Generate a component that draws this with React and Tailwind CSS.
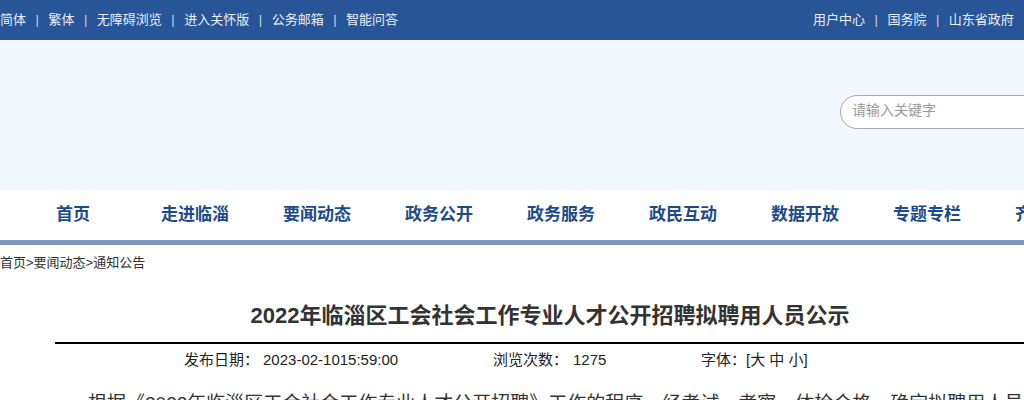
import React from 'react';

const topLeft = ['简体', '繁体', '无障碍浏览', '进入关怀版', '公务邮箱', '智能问答'];
const topRight = ['用户中心', '国务院', '山东省政府', '淄博市政府'];
const navItems = ['首页', '走进临淄', '要闻动态', '政务公开', '政务服务', '政民互动', '数据开放', '专题专栏', '齐都文化'];

function LinkGroup({ items }) {
    return (
        <div className="flex items-center">
            {items.map((t, i) => (
                <React.Fragment key={t}>
                    <a className="text-[13px] text-[#e8eef8] whitespace-nowrap">{t}</a>
                    {i < items.length - 1 && (
                        <span className="text-[13px] text-[#c9d5ea] mx-[9.5px]">|</span>
                    )}
                </React.Fragment>
            ))}
        </div>
    );
}

export default function App() {
    return (
        <div
            className="w-[1024px] h-[400px] overflow-hidden bg-white"
            style={{ fontFamily: '"Liberation Sans", "Noto Sans CJK SC", sans-serif' }}
        >
            <div className="w-[1100px]">
                {/* Top bar */}
                <div className="h-[40px] bg-[#285598] flex items-center">
                    <LinkGroup items={topLeft} />
                    <div className="ml-[415px]">
                        <LinkGroup items={topRight} />
                    </div>
                </div>

                {/* Header */}
                <div className="h-[150px] bg-[#f3f7fe] flex items-start">
                    <div className="ml-[840px] mt-[55px] w-[260px] h-[34px] bg-white border border-[#a9abb0] rounded-l-full flex items-center pl-[11px] pb-[3px]">
                        <span className="text-[14px] text-[#9a9a9a]">请输入关键字</span>
                    </div>
                </div>

                {/* Nav */}
                <div className="h-[50px] bg-white flex items-center pl-[12px]">
                    {navItems.map(n => (
                        <div key={n} className="w-[122px] shrink-0 text-center text-[17px] font-bold text-[#1d4a8c] whitespace-nowrap">
                            {n}
                        </div>
                    ))}
                </div>
                <div className="h-[5px] bg-[#7b96bd]" />

                {/* Breadcrumb */}
                <div className="pt-[10px] text-[13px] text-[#333] leading-[15px]">
                    首页&gt;要闻动态&gt;通知公告
                </div>

                {/* Article */}
                <div className="w-[1000px] mx-auto">
                    <h1 className="mt-[31px] text-center text-[22px] font-bold text-[#333] leading-[30px]">
                        2022年临淄区工会社会工作专业人才公开招聘拟聘用人员公示
                    </h1>
                    <div className="mx-[5px] mt-[11px] h-[2px] bg-black" />
                    <div className="flex items-center h-[32px] text-[15px] text-[#222] pl-[134px]">
                        <div className="w-[309px] whitespace-nowrap">
                            发布日期：<span className="ml-[4px]">2023-02-1015:59:00</span>
                        </div>
                        <div className="w-[208px] whitespace-nowrap">
                            浏览次数：<span className="ml-[5px]">1275</span>
                        </div>
                        <div className="whitespace-nowrap">
                            字体：[大 中 小]
                        </div>
                    </div>
                    <p className="mt-[10px] text-[19px] text-[#333] leading-[36px] indent-[2em] whitespace-nowrap">
                        根据《2022年临淄区工会社会工作专业人才公开招聘》工作的程序，经考试、考察、体检合格，确定拟聘用人员
                    </p>
                </div>
            </div>
        </div>
    );
}
